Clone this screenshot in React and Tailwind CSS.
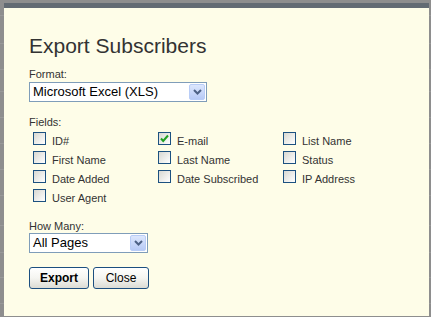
import React from "react";

const Chevron = () => (
  <svg width="9" height="6" viewBox="0 0 9 6">
    <polyline points="1,1 4.5,4.5 8,1" fill="none" stroke="#4d6185" strokeWidth="2" />
  </svg>
);

function Select({ value, width }) {
  return (
    <div
      className="flex items-center h-[20px] border border-[#7f9db9] bg-white"
      style={{ width }}
    >
      <span className="flex-1 pl-[3px] text-[13px] leading-[16px] text-black whitespace-nowrap">{value}</span>
      <div className="mr-[1px] w-[16px] h-[16px] flex items-center justify-center rounded-[2px] border border-[#b9cdf7] bg-linear-to-b from-[#dde7fd] to-[#b7caf6]">
        <Chevron />
      </div>
    </div>
  );
}

function Check({ label, checked }) {
  return (
    <div className="h-[19px] flex items-start pt-[3px]">
      <div className="w-[13px] h-[13px] border border-[#1c5180] bg-linear-to-br from-[#d8d8d2] to-white flex items-center justify-center shrink-0">
        {checked && (
          <svg width="11" height="11" viewBox="0 0 11 11">
            <polyline points="2,5.5 4.2,8 9,2.5" fill="none" stroke="#21a121" strokeWidth="2" />
          </svg>
        )}
      </div>
      <span className="ml-[6px] mt-[3px] text-[11px] leading-[13px] text-[#333] whitespace-nowrap">{label}</span>
    </div>
  );
}

export default function App() {
  const rows = [16, 28, 26, 22, 26, 26, 26, 26, 30, 27, 25, 26, 20];
  const col1 = ["ID#", "First Name", "Date Added", "User Agent"];
  const col2 = ["E-mail", "Last Name", "Date Subscribed"];
  const col3 = ["List Name", "Status", "IP Address"];
  return (
    <div className="relative w-[431px] h-[317px] bg-[#8e8e8e] overflow-hidden font-['Liberation_Sans',Arial,sans-serif]">
      <div className="flex flex-col">
        {rows.map((h, i) => (
          <div key={i} className="border-b border-[#999999]" style={{ height: h }} />
        ))}
      </div>
      <div className="absolute left-[4px] top-[3px] w-[425px] h-[313px] bg-[#fefde8] border-t-[5px] border-[#636b73] pl-[25px] pt-[26px]">
        <h1 className="text-[21px] leading-[24px] text-[#333] font-normal">Export Subscribers</h1>
        <div className="mt-[10px] text-[11px] leading-[13px] text-[#333]">Format:</div>
        <div className="mt-[1px]">
          <Select value="Microsoft Excel (XLS)" width={178} />
        </div>
        <div className="mt-[14px] text-[11px] leading-[13px] text-[#333]">Fields:</div>
        <div className="ml-[4px] grid grid-cols-[125px_125px_125px]">
          <div className="flex flex-col">
            {col1.map((l) => (
              <Check key={l} label={l} />
            ))}
          </div>
          <div className="flex flex-col">
            {col2.map((l) => (
              <Check key={l} label={l} checked={l === "E-mail"} />
            ))}
          </div>
          <div className="flex flex-col">
            {col3.map((l) => (
              <Check key={l} label={l} />
            ))}
          </div>
        </div>
        <div className="mt-[15px] text-[11px] leading-[13px] text-[#333]">How Many:</div>
        <Select value="All Pages" width={119} />
        <div className="mt-[14px] flex gap-[4px]">
          <button className="w-[60px] h-[22px] rounded-[3px] border border-[#1c4f80] bg-linear-to-b from-white via-[#f5f5f1] to-[#dcdcd4] text-[12px] font-bold text-black">
            Export
          </button>
          <button className="w-[56px] h-[22px] rounded-[3px] border border-[#1c4f80] bg-linear-to-b from-white via-[#f5f5f1] to-[#dcdcd4] text-[12px] text-black">
            Close
          </button>
        </div>
      </div>
    </div>
  );
}
